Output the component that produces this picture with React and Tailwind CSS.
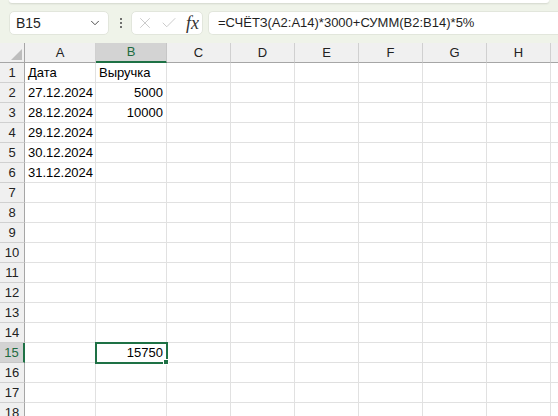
import { ChevronDown, X, Check } from "lucide-react";

const COLS = ["A", "B", "C", "D", "E", "F", "G", "H", ""];
const WIDTHS = ["w-[71px]", "w-[71px]", "w-[64px]", "w-[64px]", "w-[64px]", "w-[64px]", "w-[64px]", "w-[64px]", "w-[64px]"];

const cells = {
  "1A": { v: "Дата" },
  "1B": { v: "Выручка" },
  "2A": { v: "27.12.2024" },
  "3A": { v: "28.12.2024" },
  "4A": { v: "29.12.2024" },
  "5A": { v: "30.12.2024" },
  "6A": { v: "31.12.2024" },
  "2B": { v: "5000", right: true },
  "3B": { v: "10000", right: true },
  "15B": { v: "15750", right: true },
};

function Toolbar() {
  return (
    <div className="relative h-[43px] shrink-0 bg-[#eff3e9]">
      <div className="mx-[9px] h-[3px] rounded-b-[6px] bg-white shadow-[0_1px_2px_rgba(0,0,0,0.12)]" />
      <div className="mt-[8px] flex h-[24px] items-center">
        <div className="ml-[9px] flex h-[24px] w-[100px] items-center justify-between rounded-[5px] border border-[#e2e6dc] bg-white pl-[6px] pr-[6px]">
          <span className="text-[14px] text-[#1f1f1f]">B15</span>
          <ChevronDown className="h-[14px] w-[14px] text-[#444]" strokeWidth={1.6} />
        </div>
        <div className="ml-[10px] flex w-[4px] flex-col items-center gap-[2px]">
          <span className="h-[2px] w-[2px] rounded-full bg-[#444]" />
          <span className="h-[2px] w-[2px] rounded-full bg-[#444]" />
          <span className="h-[2px] w-[2px] rounded-full bg-[#444]" />
        </div>
        <div className="ml-[8px] flex h-[24px] w-[72px] items-center rounded-[5px] border border-[#e2e6dc] bg-white pl-[4px]">
          <X className="h-[18px] w-[18px] text-[#c0c0c0]" strokeWidth={1.1} />
          <Check className="ml-[6px] h-[18px] w-[18px] text-[#c0c0c0]" strokeWidth={1.1} />
          <span className="ml-[8px] font-['Liberation_Serif',serif] text-[18px] italic leading-none text-[#333]">fx</span>
        </div>
        <div className="ml-[5px] flex h-[24px] flex-1 items-center rounded-l-[5px] border border-r-0 border-[#e2e6dc] bg-white pl-[9px]">
          <span className="text-[13px] text-[#1f1f1f]">=СЧЁТЗ(A2:A14)*3000+СУММ(B2:B14)*5%</span>
        </div>
      </div>
    </div>
  );
}

function HeaderRow() {
  return (
    <div className="flex h-[20px] shrink-0">
      <div className="relative w-[25px] shrink-0 border-b border-r border-[#a6a6a6] bg-[#f0f0f0]">
        <svg className="absolute bottom-[2px] right-[2px]" width="11" height="11" viewBox="0 0 11 11">
          <polygon points="11,0 11,11 0,11" fill="#bdbdbd" />
        </svg>
      </div>
      {COLS.map((c, i) => (
        <div
          key={i}
          className={
            "flex shrink-0 items-center justify-center border-r text-[13px] " +
            WIDTHS[i] +
            (c === "B"
              ? " border-b-2 border-r-[#c6c6c6] border-b-[#1e7145] bg-[#d3d3d3] text-[#1e6b40]"
              : " border-b border-r-[#d0d0d0] border-b-[#a6a6a6] bg-[#f0f0f0] text-[#222]")
          }
        >
          {c}
        </div>
      ))}
    </div>
  );
}

function Row({ n }) {
  const selected = n === 15;
  return (
    <div className="flex h-[20px] shrink-0">
      <div
        className={
          "flex w-[25px] shrink-0 items-center justify-center border-b text-[13px] " +
          (selected
            ? "border-r-2 border-b-[#c6c6c6] border-r-[#1e7145] bg-[#d3d3d3] text-[#1e6b40]"
            : "border-r border-b-[#d0d0d0] border-r-[#a6a6a6] bg-[#f0f0f0] text-[#222]")
        }
      >
        {n}
      </div>
      {COLS.map((c, i) => {
        const cell = cells[n + c];
        const sel = selected && c === "B";
        return (
          <div
            key={i}
            className={
              "relative flex shrink-0 items-center border-b border-r border-[#e1e1e1] px-[3px] text-[13px] text-black " +
              WIDTHS[i] +
              (cell && cell.right ? " justify-end" : " justify-start") +
              (sel ? " z-10" : "")
            }
          >
            {cell && <span className="whitespace-nowrap">{cell.v}</span>}
            {sel && (
              <>
                <div className="pointer-events-none absolute -left-[1px] -top-[1px] h-[22px] w-[73px] border-2 border-[#1e7145]" />
                <div className="absolute -bottom-[3px] -right-[3px] h-[6px] w-[6px] border border-white bg-[#1e7145]" />
              </>
            )}
          </div>
        );
      })}
    </div>
  );
}

export default function App() {
  const rows = Array.from({ length: 18 }, (_, i) => i + 1);
  return (
    <div className="flex h-[416px] w-[558px] flex-col overflow-hidden bg-white font-['Liberation_Sans',Arial,sans-serif]">
      <Toolbar />
      <HeaderRow />
      {rows.map((n) => (
        <Row key={n} n={n} />
      ))}
    </div>
  );
}
